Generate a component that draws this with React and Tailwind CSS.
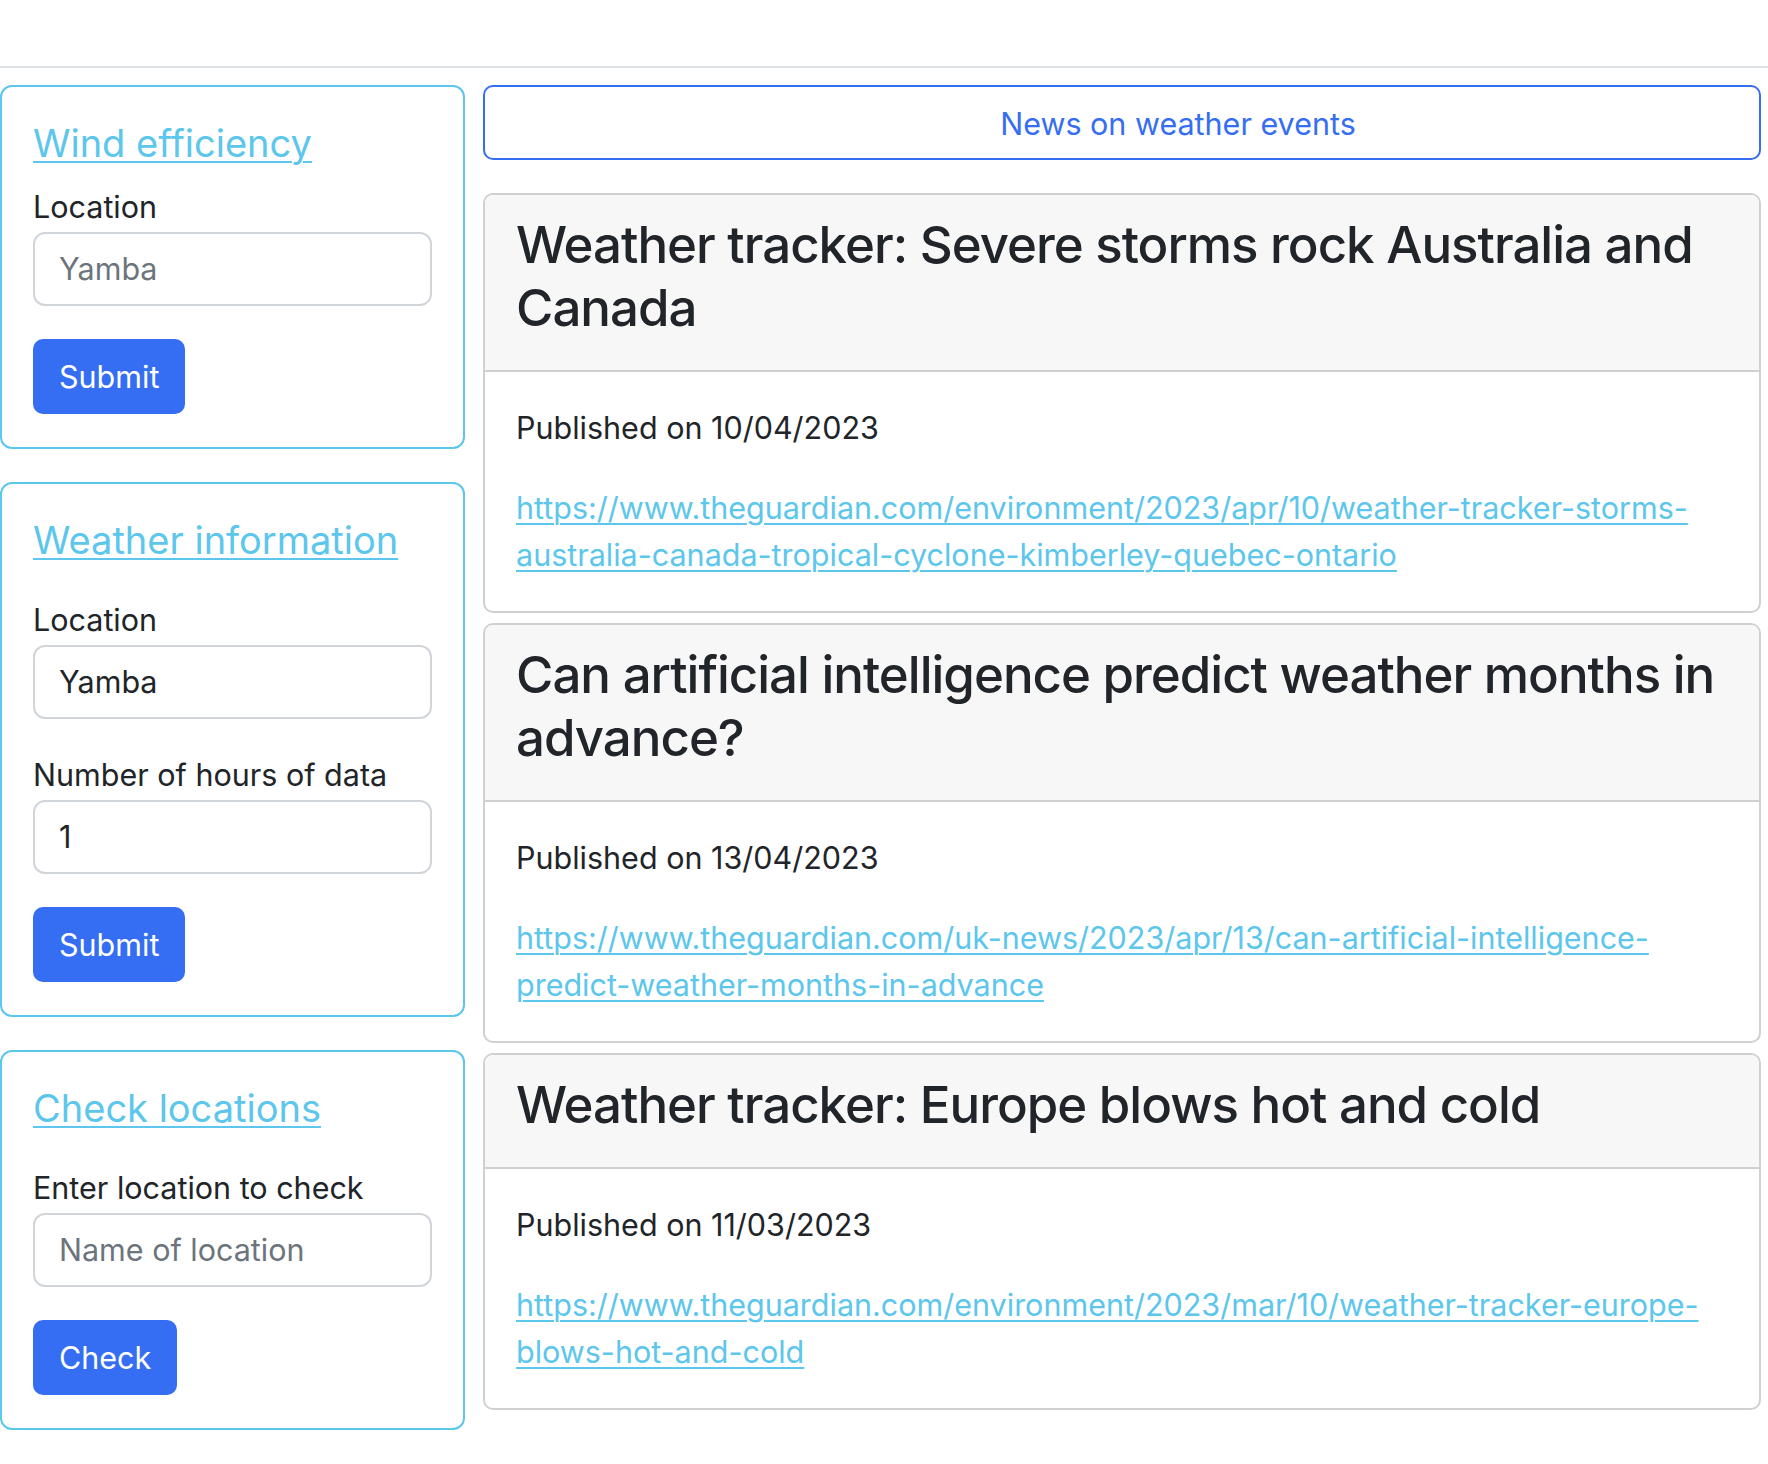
import React from "react";

const LINK = "text-[#5cc6ec] underline decoration-2 underline-offset-[4px]";

function SideCard({ title, fields, button }) {
  return (
    <div className="border-2 border-[#5cc6ec] rounded-[12px] px-[31px] py-[33px] flex flex-col">
      <a href="#" className={`text-[38px] leading-[46px] font-normal ${LINK}`}>{title}</a>
      {fields.map((f, i) => (
        <div key={i} className={i === 0 ? (fields.length > 1 || f.big ? "mt-[34px]" : "mt-[18px]") : "mt-[33px]"}>
          <div className="text-[30.5px] leading-[46px] text-[#212529]">{f.label}</div>
          <div className="mt-[2px] h-[74px] border-2 border-[#d1d5da] rounded-[12px] px-[24px] flex items-center text-[30.5px]">
            {f.value ? (
              <span className="text-[#212529]">{f.value}</span>
            ) : (
              <span className="text-[#6c757d]">{f.placeholder}</span>
            )}
          </div>
        </div>
      ))}
      <div className="mt-[33px] flex">
        <button className="h-[75px] px-[26px] rounded-[10px] bg-[#356ef3] text-white text-[30.5px] leading-[46px]">
          {button}
        </button>
      </div>
    </div>
  );
}

function Article({ lines, date, url }) {
  return (
    <div className="border-2 border-[#d0d0d0] rounded-[10px] overflow-hidden bg-white">
      <div className="bg-[#f7f7f7] border-b-2 border-[#d0d0d0] px-[31px] pt-[18px] pb-[31px]">
        <h3 className="text-[51px] leading-[63px] font-medium text-[#212529] tracking-[-1px] whitespace-nowrap">
          {lines.map((l, i) => (
            <React.Fragment key={i}>
              {i > 0 && <br />}
              {l}
            </React.Fragment>
          ))}
        </h3>
      </div>
      <div className="px-[31px] py-[33px]">
        <p className="text-[30.5px] leading-[46px] text-[#212529]">Published on {date}</p>
        <p className="mt-[33px] text-[30.5px] leading-[47px] whitespace-nowrap">
          <a href="#" className={LINK}>
            {url[0]}
            <br />
            {url[1]}
          </a>
        </p>
      </div>
    </div>
  );
}

export default function App() {
  return (
    <div className="min-h-screen bg-white font-['Inter',sans-serif] text-[#212529]">
      <div className="h-[68px] border-b-2 border-[#dee2e6]" />
      <div className="flex pt-[17px] pb-[36px]">
        <div className="w-[465px] flex flex-col gap-[33px]">
          <SideCard
            title="Wind efficiency"
            fields={[{ label: "Location", placeholder: "Yamba" }]}
            button="Submit"
          />
          <SideCard
            title="Weather information"
            fields={[
              { label: "Location", value: "Yamba" },
              { label: "Number of hours of data", value: "1" },
            ]}
            button="Submit"
          />
          <SideCard
            title="Check locations"
            fields={[{ label: "Enter location to check", placeholder: "Name of location", big: true }]}
            button="Check"
          />
        </div>
        <div className="ml-[18px] w-[1278px] flex flex-col">
          <button className="h-[75px] border-2 border-[#356ef3] rounded-[10px] text-[#356ef3] text-[30.5px] leading-[46px] flex items-center justify-center pl-[112px] pt-[3px]">
            News on weather events
          </button>
          <div className="mt-[33px] flex flex-col gap-[10px]">
            <Article
              lines={["Weather tracker: Severe storms rock Australia and", "Canada"]}
              date="10/04/2023"
              url={[
                "https://www.theguardian.com/environment/2023/apr/10/weather-tracker-storms-",
                "australia-canada-tropical-cyclone-kimberley-quebec-ontario",
              ]}
            />
            <Article
              lines={["Can artificial intelligence predict weather months in", "advance?"]}
              date="13/04/2023"
              url={[
                "https://www.theguardian.com/uk-news/2023/apr/13/can-artificial-intelligence-",
                "predict-weather-months-in-advance",
              ]}
            />
            <Article
              lines={["Weather tracker: Europe blows hot and cold"]}
              date="11/03/2023"
              url={[
                "https://www.theguardian.com/environment/2023/mar/10/weather-tracker-europe-",
                "blows-hot-and-cold",
              ]}
            />
          </div>
        </div>
      </div>
    </div>
  );
}
